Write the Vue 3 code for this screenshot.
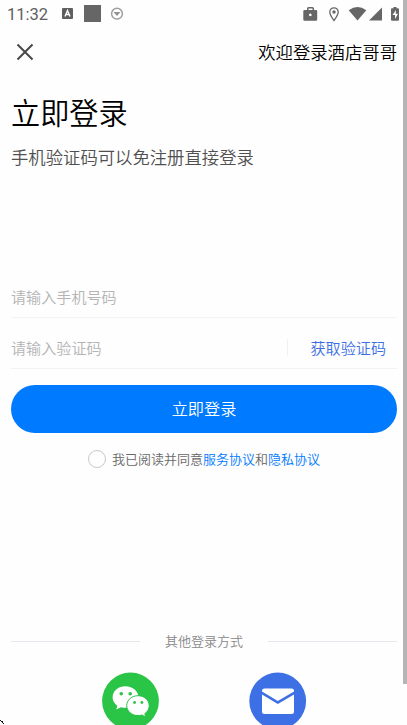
<script setup>
import { ref } from 'vue'

const phone = ref('')
const code = ref('')
</script>

<template>
  <div class="screen">
    <header class="status">
      <span class="time">11:32</span>
      <svg class="status-left" width="66" height="18" viewBox="0 0 66 18">
        <rect x="2" y="3" width="11" height="11" rx="1" fill="#5f5f5f" />
        <path d="M5 11.5L7.5 5.500L10 11.500M6 9.500H9" fill="none" stroke="#fff" stroke-width="1.400" />
        <rect x="24" y="0" width="17" height="17" fill="#666" />
        <circle cx="57" cy="8.700" r="5.400" fill="none" stroke="#a0a0a0" stroke-width="1.500" />
        <path d="M53.500 7h7L57 11z" fill="#929292" />
      </svg>
      <svg class="status-right" width="100" height="18" viewBox="0 0 100 18">
        <path fill="#666" fill-rule="evenodd" d="M5 4V2.500Q5 1 6.500 1h4Q12 1 12 2.500V4h2q1.200 0 1.200 1.200v8.300q0 1.200-1.200 1.200H2.500q-1.200 0-1.200-1.200V5.200Q1.300 4 2.500 4zM6.500 4h4V2.500h-4zM8.300 7.500a1.400 1.400 0 1 0 .01 0z" />
        <path d="M32 14.500C29 10.500 27.800 8.500 27.800 6a4.200 4.200 0 0 1 8.400 0c0 2.500-1.200 4.500-4.200 8.500z" fill="none" stroke="#666" stroke-width="1.300" />
        <circle cx="32" cy="6" r="1.700" fill="#666" />
        <path d="M46.700 4.300Q55.500-2.500 64.300 4.300L55.500 14.600z" fill="#666" />
        <path d="M80 1.500V14.500H67z" fill="#666" />
        <path d="M89 3.200q0-1 1-1h1.500V1h3v1.200H96q1 0 1 1v10.500q0 1-1 1h-6q-1 0-1-1z" fill="#666" />
        <path d="M94 4l-3.500 5H93v4l3-5.200h-2.300z" fill="#fff" />
      </svg>
    </header>

    <nav class="topbar">
      <svg class="close" width="18" height="18" viewBox="0 0 18 18">
        <path d="M1.500 1.500L16.500 16.500M16.500 1.500L1.500 16.500" fill="none" stroke="#484848" stroke-width="2" />
      </svg>
      <span class="welcome">欢迎登录酒店哥哥</span>
    </nav>

    <main class="content">
      <h1>立即登录</h1>
      <p class="subtitle">手机验证码可以免注册直接登录</p>

      <form class="form" @submit.prevent>
        <div class="field phone">
          <input v-model="phone" type="tel" placeholder="请输入手机号码" />
        </div>
        <div class="field code">
          <input v-model="code" type="text" placeholder="请输入验证码" />
          <button class="get-code" type="button">获取验证码</button>
        </div>
        <button class="submit" type="submit">立即登录</button>
      </form>

      <div class="agreement">
        <span class="radio"></span>
        <span>我已阅读并同意<a>服务协议</a>和<a>隐私协议</a></span>
      </div>

      <div class="divider"><span>其他登录方式</span></div>

      <div class="methods">
        <svg width="58" height="58" viewBox="0 0 58 58">
          <circle cx="28.500" cy="29" r="28.400" fill="#2ac447" />
          <path d="M23.500 14.300c-7.300 0-12.900 4.900-12.900 11 0 3.500 1.800 6.400 4.700 8.400l-1 3.800 4.700-2.300c1.500.4 3 .6 4.500.6 7.300 0 13-4.700 13-10.500s-5.700-11-13-11z" fill="#fff" />
          <path d="M36 23.700c-6.300 0-11.300 4.400-11.300 9.900s5 10 11.300 10c1.400 0 2.700-.2 3.900-.6l3.800 2-.9-3.300c2.800-1.900 4.400-4.800 4.400-8.100 0-5.500-4.900-9.900-11.200-9.900z" fill="#fff" stroke="#2ac447" stroke-width="1" />
          <g fill="#2ac447">
            <circle cx="19.300" cy="21.700" r="1.800" />
            <circle cx="28.200" cy="21.700" r="1.800" />
            <circle cx="32.600" cy="30.500" r="1.400" />
            <circle cx="39.900" cy="30.500" r="1.400" />
          </g>
        </svg>
        <svg width="58" height="58" viewBox="0 0 58 58">
          <circle cx="28.700" cy="29" r="28.400" fill="#3d70e5" />
          <path d="M13 19q0-2.500 2.500-2.500h27q2.500 0 2.500 2.500v.6L28.800 29 13 19.600z" fill="#fff" />
          <path d="M13 22.400L28.800 31.900 45 22.400v17q0 2.500-2.500 2.500h-27q-2.500 0-2.500-2.500z" fill="#fff" />
        </svg>
      </div>
    </main>

    <div class="scrollbar"></div>
    <svg class="corner" width="5" height="5" viewBox="0 0 5 5" shape-rendering="crispEdges">
      <path d="M0 0h1v1H0zM1 1h1v1H1zM2 2h1v1H2zM3 3h1v1H3zM2 1h1v1H2z" fill="#111" />
    </svg>
  </div>
</template>

<style>
body {
  background: #fff;
}
</style>

<style scoped>
.screen {
  position: relative;
  box-sizing: border-box;
  width: 407px;
  height: 725px;
  overflow: hidden;
  background: #fefefe;
  font-family: 'Noto Sans CJK SC', sans-serif;
  font-weight: 350;
}
.status {
  display: flex;
  align-items: flex-start;
  height: 28px;
  padding: 5px 5px 0 7px;
  box-sizing: border-box;
}
.time {
  width: 53px;
  color: #606060;
  font: 400 16.500px/20px Roboto, sans-serif;
}
.status-right {
  margin-left: auto;
  margin-top: 1px;
}
.topbar {
  display: flex;
  align-items: center;
  justify-content: space-between;
  height: 48px;
  padding: 0 10px 0 16px;
}
.welcome {
  color: #000;
  font-size: 17.350px;
  line-height: 24px;
}
.content {
  padding: 0 10px 0 11px;
}
h1 {
  margin: 14px 0 0;
  color: #000;
  font-size: 29.200px;
  font-weight: 350;
  line-height: 42px;
}
.subtitle {
  margin: 13px 0 0;
  color: #505050;
  font-size: 17.350px;
  line-height: 24px;
}
.form {
  margin-top: 108px;
}
.field {
  display: flex;
  align-items: center;
  box-sizing: border-box;
  border-bottom: 1px solid #f3f3f3;
}
.phone {
  height: 41px;
  padding-bottom: 2px;
}
.code {
  height: 51px;
  padding-top: 8px;
}
input {
  flex: 1;
  min-width: 0;
  padding: 0;
  border: 0;
  outline: 0;
  background: transparent;
  font: 350 15.100px/22px 'Noto Sans CJK SC', sans-serif;
}
input::placeholder {
  color: #b4b4b4;
  opacity: 1;
}
button {
  border: 0;
  background: none;
  font-family: inherit;
  font-weight: inherit;
}
.get-code {
  height: 17px;
  padding: 0 11px 0 23px;
  border-left: 1px solid #f1f1f1;
  color: #3d70e5;
  font-size: 15.100px;
  line-height: 17px;
}
.submit {
  display: block;
  width: 100%;
  height: 48px;
  margin-top: 16px;
  padding: 0 0 3px;
  border-radius: 24px;
  background: #007aff;
  color: #fff;
  font-size: 16.200px;
}
.agreement {
  display: flex;
  align-items: center;
  justify-content: center;
  gap: 6px;
  height: 20px;
  margin-top: 16px;
  color: #686868;
  font-size: 13px;
  line-height: 20px;
}
.agreement a {
  color: #007aff;
}
.radio {
  box-sizing: border-box;
  width: 18px;
  height: 18px;
  border: 1px solid #c8c8c8;
  border-radius: 50%;
}
.divider {
  display: flex;
  align-items: center;
  justify-content: space-between;
  height: 20px;
  margin-top: 162px;
  color: #888;
  font-size: 13px;
  line-height: 20px;
}
.divider::before,
.divider::after {
  width: 129px;
  height: 1px;
  background: #e6e8ee;
  content: '';
}
.methods {
  display: flex;
  justify-content: center;
  gap: 89px;
  margin-top: 21px;
}
.scrollbar {
  position: absolute;
  top: 0;
  right: 0;
  width: 4px;
  height: 684px;
  background: #b5b5b5;
}
.corner {
  position: absolute;
  bottom: 0;
  left: 0;
}
</style>
